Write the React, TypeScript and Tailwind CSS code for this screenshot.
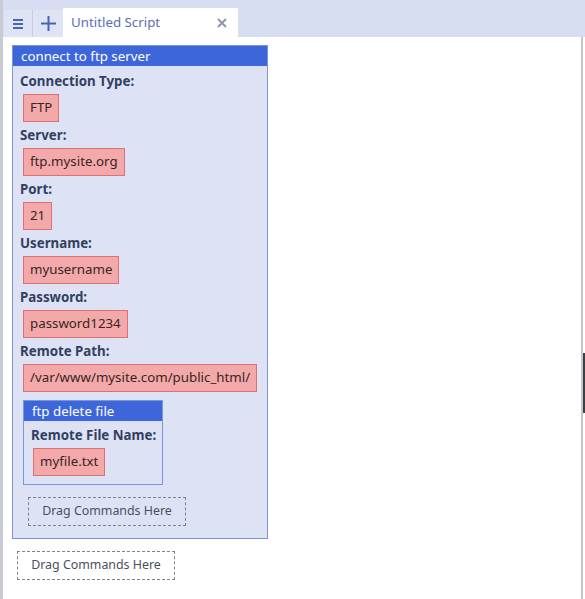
import { useState } from 'react';

type Field = { label: string; value: string };

const fields: Field[] = [
  { label: 'Connection Type:', value: 'FTP' },
  { label: 'Server:', value: 'ftp.mysite.org' },
  { label: 'Port:', value: '21' },
  { label: 'Username:', value: 'myusername' },
  { label: 'Password:', value: 'password1234' },
  { label: 'Remote Path:', value: '/var/www/mysite.com/public_html/' },
];

function Value({ children }: { children: string }) {
  return (
    <div className="mt-[1px] mb-[2px] flex h-[28px] w-fit items-center border border-[#e06f73] bg-[#f3a9aa] px-[6px] text-[13.3px] whitespace-nowrap text-[#3a2424]">
      {children}
    </div>
  );
}

function Label({ children }: { children: string }) {
  return (
    <div className="h-[23px] text-[13.3px] leading-[23px] font-bold whitespace-nowrap text-[#33405f]">
      {children}
    </div>
  );
}

function DropZone({ className }: { className?: string }) {
  return (
    <div
      className={
        'flex h-[29px] w-[158px] items-center justify-center border border-dashed border-[#7d8290] text-[12.4px] text-[#4a5060] ' +
        (className ?? '')
      }
    >
      Drag Commands Here
    </div>
  );
}

export default function App() {
  const [title] = useState('Untitled Script');

  return (
    <div
      className="flex h-[599px] w-[585px] flex-col overflow-hidden bg-white"
      style={{ fontFamily: '"Noto Sans", "Open Sans", sans-serif' }}
    >
      {/* Tab strip */}
      <div className="flex h-[37px] shrink-0 items-end border-l-[3px] border-[#c9cbd3] bg-[#d8def2] pl-[1px]">
        <button className="flex h-[27px] w-[29px] items-center justify-center border-r border-[#c6cde6] bg-[#dfe4f5]">
          <svg width="10" height="12" viewBox="0 0 10 12">
            <rect x="0" y="1" width="10" height="2" fill="#4b63b4" />
            <rect x="0" y="5" width="10" height="2" fill="#4b63b4" />
            <rect x="0" y="9" width="10" height="2" fill="#4b63b4" />
          </svg>
        </button>
        <button className="flex h-[27px] w-[30px] items-center justify-center bg-[#dfe4f5]">
          <svg width="15" height="15" viewBox="0 0 15 15">
            <rect x="6.5" y="0" width="2" height="15" fill="#4b63b4" />
            <rect x="0" y="6.5" width="15" height="2" fill="#4b63b4" />
          </svg>
        </button>
        <div className="flex h-[29px] w-[175px] items-center justify-between bg-white pr-[11px] pl-[8px]">
          <span className="text-[13.3px] text-[#5a6fb8]">{title}</span>
          <svg width="10" height="10" viewBox="0 0 10 10">
            <path d="M1 1 L9 9 M9 1 L1 9" stroke="#8f96a8" strokeWidth="2" />
          </svg>
        </div>
      </div>

      {/* Script canvas */}
      <div className="flex min-h-0 flex-1">
        <div className="flex-1 border-l-[3px] border-[#c9cbd3] pt-[8px] pl-[9px]">
          <div className="w-[256px] border border-[#7b95dc] bg-[#dde3f5]">
            <div className="h-[20px] bg-[#3e66db] pl-[8px] text-[13.3px] leading-[20px] text-white">
              connect to ftp server
            </div>
            <div className="pt-[4px] pr-[8px] pb-[12px] pl-[7px]">
              {fields.map((f) => (
                <div key={f.label}>
                  <Label>{f.label}</Label>
                  <div className="pl-[3px]">
                    <Value>{f.value}</Value>
                  </div>
                </div>
              ))}

              <div className="mt-[8px] ml-[3px] w-[140px] border border-[#7b95dc] bg-[#dde3f5]">
                <div className="h-[20px] bg-[#3e66db] pl-[8px] text-[13.3px] leading-[20px] text-white">
                  ftp delete file
                </div>
                <div className="pt-[3px] pb-[6px] pl-[7px]">
                  <Label>Remote File Name:</Label>
                  <div className="pl-[2px]">
                    <Value>myfile.txt</Value>
                  </div>
                </div>
              </div>

              <DropZone className="mt-[12px] ml-[8px]" />
            </div>
          </div>

          <DropZone className="mt-[12px] ml-[5px]" />
        </div>

        {/* Scrollbar */}
        <div className="relative w-[4px] border-l-[2px] border-[#c4c6cc]">
          <div className="absolute top-[316px] left-0 h-[60px] w-[2px] bg-[#3b3f48]" />
        </div>
      </div>
    </div>
  );
}
